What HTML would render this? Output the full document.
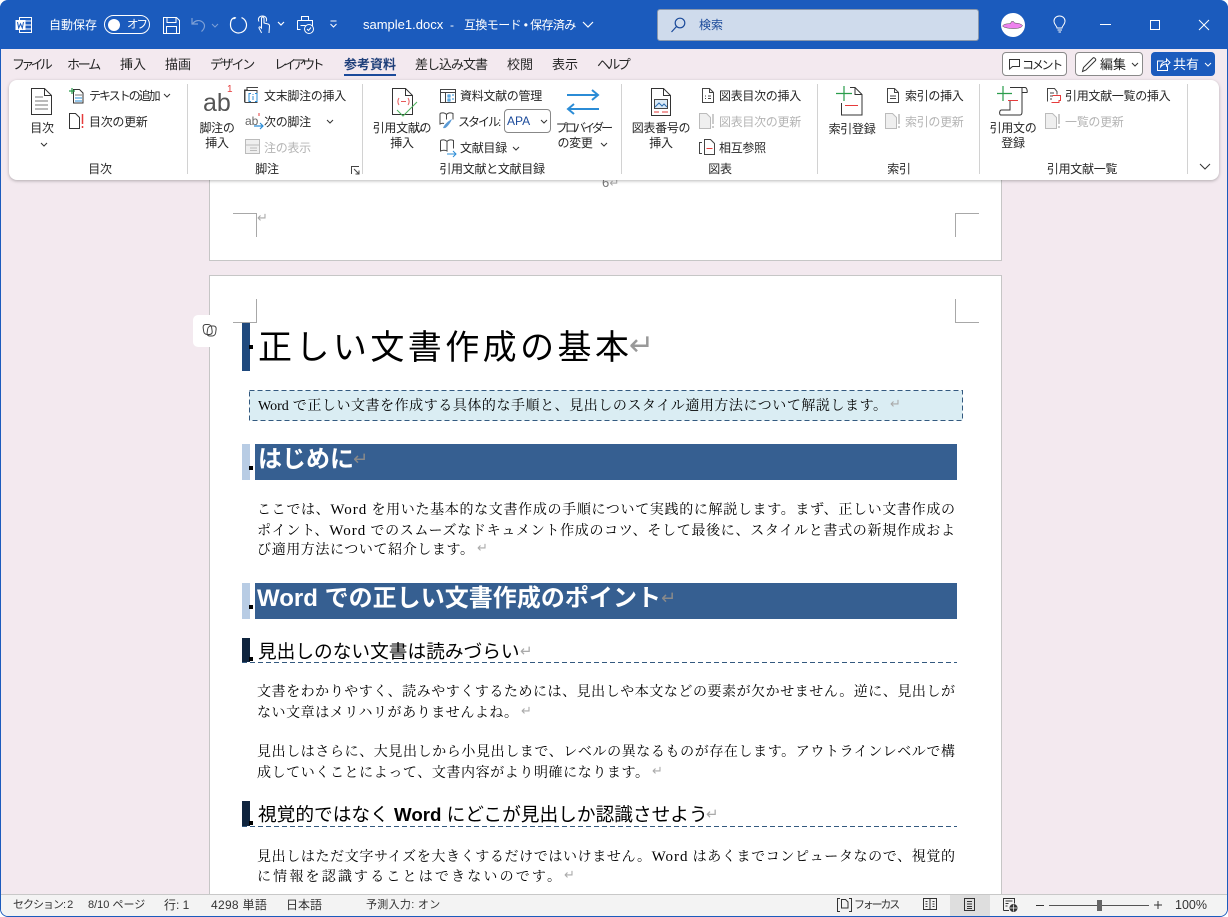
<!DOCTYPE html>
<html lang="ja"><head><meta charset="utf-8"><title>sample1.docx</title>
<style>
*{box-sizing:border-box}
html,body{margin:0;padding:0;width:1228px;height:917px;overflow:hidden;background:#fff}
body{font-family:"Liberation Sans","Noto Sans CJK JP",sans-serif;color:#262626;position:relative}
.a{position:absolute;white-space:nowrap;line-height:16px}
.u{font-size:12px;letter-spacing:-.3px}
.t{font-size:13px;top:57px}
.m{line-height:15px}
.c{text-align:center}
.d{color:#b4b4b4}
.b{font-family:"Liberation Serif","Noto Serif CJK JP","Noto Serif CJK SC",serif;font-size:14px;color:#000;text-align:justify;text-align-last:justify;line-height:20px;height:20px;transform:translateY(1px)}
.wd{font-size:15px;letter-spacing:1px}
.h{font-family:"Liberation Sans","Noto Sans CJK JP",sans-serif;color:#000}
.r{color:#aaa;font-family:"DejaVu Sans",sans-serif}
.rb{font-size:13px;margin-top:-1px}
.dl{position:absolute;height:1px;background:repeating-linear-gradient(90deg,#33597f 0 5px,transparent 5px 8px)}
svg{position:absolute;overflow:visible;fill:none}
.box{position:absolute}
.w{color:#fff}
.s{font-size:11px;color:#333;top:897px}
</style></head><body>
<!-- window -->
<div class="box" style="left:0;top:0;width:1228px;height:917px;background:#f3e9ef;border:1px solid #1b5bbd;border-top:0;border-radius:8px"></div>
<div class="box" style="left:0;top:0;width:1228px;height:49px;background:#1b5bbd;border-radius:8px 8px 0 0"></div>

<!-- title bar icons -->
<svg style="left:15px;top:16px" width="18" height="18"><rect x="4.500" y="1.500" width="12" height="15" stroke="#fff"/><path d="M10 5h6M10 9h6M10 13h6" stroke="#fff"/><rect x="0.5" y="4" width="10" height="10" fill="#fff"/><path d="M2.500 6l1.200 6 1.800-4.200 1.800 4.200 1.200-6" stroke="#1b5bbd" stroke-width="1"/></svg>
<span class="a u w" style="left:49px;top:17px;letter-spacing:0">自動保存</span>
<div class="box" style="left:104px;top:15px;width:46px;height:19px;border:1px solid #fff;border-radius:10px"></div>
<div class="box" style="left:108px;top:18.5px;width:12px;height:12px;background:#fff;border-radius:50%"></div>
<span class="a u w" style="left:127px;top:17px;font-size:11.5px;letter-spacing:-2px">オフ</span>
<svg style="left:163px;top:17px" width="17" height="17" stroke="#fff"><path d="M.5.500h13l3 3v13H.500z"/><path d="M4 .5v5h9v-5M3.500 16.500v-7h10v7"/></svg>
<svg style="left:190px;top:16px" width="20" height="18" stroke="#7ea0d6" stroke-width="1.2"><path d="M2 2v6h6M2.500 8C5 4 10 3.500 13 6.500c2.500 2.500 1.800 6-1.500 9"/></svg>
<svg style="left:211px;top:23px" width="8" height="6" stroke="#7ea0d6"><path d="M1 1l3 3 3-3"/></svg>
<svg style="left:228px;top:15px" width="20" height="20" stroke="#fff" stroke-width="1.2"><path d="M8 2.500L5.500 4M7 2.500C3 3.500 2.500 6.500 2.500 10a8 8 0 1 0 11-7.400"/></svg>
<svg style="left:255px;top:15px" width="20" height="20" stroke="#fff"><path d="M6.500 18c-.5-2-2-3.500-2.500-5-.3-1 .8-1.500 1.500-.8l1 1V3.500c0-2 2.500-2 2.500 0v4.500l4 1c1 .3 1.500 1 1.500 2l-.5 7"/><path d="M4 6.500C2.500 4 4 1 7.500 1s5 3 3.500 5.500"/></svg>
<svg style="left:277px;top:21px" width="8" height="6" stroke="#fff" stroke-width="1.2"><path d="M1 1l3 3 3-3"/></svg>
<svg style="left:296px;top:15px" width="20" height="20" stroke="#fff"><path d="M5.500 5.500v-4h7v4M1.500 5.500h15v9h-3M1.500 5.500v9h3"/><path d="M4.500 10.500h5"/><circle cx="13" cy="14" r="4.500" fill="#1b5bbd"/><path d="M11 14l1.500 1.500 2.500-3"/></svg>
<svg style="left:329px;top:20px" width="10" height="9" stroke="#fff"><path d="M1.500 1h6M1.500 4l3 3 3-3"/></svg>
<span class="a w" style="left:363px;top:17px;font-size:13px">sample1.docx</span>
<span class="a w" style="left:450px;top:17px;font-size:12px">-</span>
<span class="a u w" style="left:464px;top:17px;letter-spacing:-.6px">互換モード • 保存済み</span>
<svg style="left:582px;top:21px" width="12" height="8" stroke="#fff" stroke-width="1.2"><path d="M1 1l5 5 5-5"/></svg>

<!-- search -->
<div class="box" style="left:657px;top:9px;width:322px;height:32px;background:#cfdbec;border:1px solid #8a98ad;border-radius:3px"></div>
<svg style="left:670px;top:17px" width="16" height="16" stroke="#1b4a9a" stroke-width="1.2"><circle cx="10" cy="6" r="4.800"/><path d="M6.500 9.500L1.500 15"/></svg>
<span class="a u" style="left:699px;top:17px;color:#1b4a9a;letter-spacing:0">検索</span>

<!-- account -->
<div class="box" style="left:1001px;top:13px;width:24px;height:24px;background:#fff;border-radius:50%"></div>
<svg style="left:1002px;top:20px" width="22" height="11"><path d="M0.500 6c2-2.500 5-2 8-2.500l1-2 2 0 1 1.500c3 .3 6 .5 8 2.500-1 2.500-5 3-9 3s-9-.5-11-2.500z" fill="#ee82ee" stroke="#444" stroke-width=".5"/></svg>
<svg style="left:1052px;top:15px" width="16" height="20" stroke="#fff"><path d="M5 13c0-2-3-3.500-3-7 0-3 2.500-5 5.500-5S13 3 13 6c0 3.500-3 5-3 7z"/><path d="M5.500 15h4.500M6.500 17h2.500"/></svg>
<div class="box" style="left:1100px;top:24px;width:11px;height:1px;background:#fff"></div>
<div class="box" style="left:1150px;top:20px;width:10px;height:10px;border:1px solid #fff"></div>
<svg style="left:1198px;top:19px" width="12" height="12" stroke="#fff"><path d="M1 1l10 10M11 1L1 11"/></svg>

<!-- tabs -->
<span class="a t" style="left:12px;letter-spacing:-3.75px">ファイル</span>
<span class="a t" style="left:67px;letter-spacing:-2.2px">ホーム</span>
<span class="a t" style="left:120px">挿入</span>
<span class="a t" style="left:165px">描画</span>
<span class="a t" style="left:210px;letter-spacing:-2.25px">デザイン</span>
<span class="a t" style="left:274px;letter-spacing:-3.6px">レイアウト</span>
<span class="a t" style="left:344px;font-weight:bold;color:#1f3f7a">参考資料</span>
<div class="box" style="left:344px;top:74px;width:52px;height:2px;background:#1b4a9a"></div>
<span class="a t" style="left:415px;letter-spacing:-1px">差し込み文書</span>
<span class="a t" style="left:507px">校閲</span>
<span class="a t" style="left:552px">表示</span>
<span class="a t" style="left:597px;letter-spacing:-2.6px">ヘルプ</span>

<!-- right buttons -->
<div class="box" style="left:1002px;top:52px;width:65px;height:24px;background:#fff;border:1px solid #8a8a8a;border-radius:4px"></div>
<svg style="left:1008px;top:58px" width="13" height="13" stroke="#333"><path d="M1.500 1.500h10v7h-7l-3 2.500z"/></svg>
<span class="a u" style="left:1022px;top:57px;color:#222;letter-spacing:-2.25px">コメント</span>
<div class="box" style="left:1075px;top:52px;width:68px;height:24px;background:#fff;border:1px solid #8a8a8a;border-radius:4px"></div>
<svg style="left:1081px;top:56px" width="16" height="17" stroke="#333"><path d="M1.500 15.500l1-4L12 2c1-1 3.500 1 2.500 2.500L5 14z"/></svg>
<span class="a" style="left:1100px;top:57px;color:#222;font-size:13px">編集</span>
<svg style="left:1131px;top:62px" width="8" height="6" stroke="#333"><path d="M1 1l3 3 3-3"/></svg>
<div class="box" style="left:1151px;top:52px;width:64px;height:24px;background:#1b5bbd;border-radius:4px"></div>
<svg style="left:1156px;top:57px" width="15" height="15" stroke="#fff"><path d="M7.500 4h-6v9.500h10V9"/><path d="M4.500 10c.5-4 4-5.500 6-5.500V2l3.500 3.500-3.500 3.500V7c-2 0-4.500 1-6 3z"/></svg>
<span class="a w" style="left:1173px;top:57px;font-size:13px">共有</span>
<svg style="left:1204px;top:62px" width="8" height="6" stroke="#fff"><path d="M1 1l3 3 3-3"/></svg>

<!-- document area -->
<div class="box" style="left:209px;top:170px;width:793px;height:91px;background:#fff;border:1px solid #c6c6c6;border-top:0"></div>
<div class="box" style="left:209px;top:275px;width:793px;height:630px;background:#fff;border:1px solid #c6c6c6;border-bottom:0"></div>
<span class="a" style="left:602px;top:175px;color:#777;font-size:13px">6<span class="r" style="font-size:12px">↵</span></span>
<!-- crop marks -->
<div class="box" style="left:233px;top:213px;width:24px;height:24px;border-top:1px solid #a8a8a8;border-right:1px solid #a8a8a8"></div>
<span class="a r" style="left:257px;top:211px;font-size:13px">↵</span>
<div class="box" style="left:955px;top:213px;width:24px;height:24px;border-top:1px solid #a8a8a8;border-left:1px solid #a8a8a8"></div>
<div class="box" style="left:233px;top:299px;width:24px;height:24px;border-bottom:1px solid #a8a8a8;border-right:1px solid #a8a8a8"></div>
<div class="box" style="left:955px;top:299px;width:24px;height:24px;border-bottom:1px solid #a8a8a8;border-left:1px solid #a8a8a8"></div>
<!-- copilot -->
<div class="box" style="left:193px;top:315px;width:32px;height:32px;background:#fff;border-radius:5px"></div>
<svg style="left:201px;top:323px" width="17" height="15" stroke="#444"><rect x="1.500" y="1.500" width="8.500" height="10" rx="3" transform="skewX(8)"/><rect x="5.500" y="3" width="8.500" height="10" rx="3" transform="skewX(-8) translate(2,0)"/></svg>

<!-- title -->
<div class="box" style="left:242px;top:323px;width:8px;height:48px;background:#1f497d"></div>
<div class="box" style="left:249px;top:345px;width:4px;height:4px;background:#000"></div>
<span class="a h" style="left:258px;top:326px;width:371px;font-size:34px;line-height:44px;text-align:justify;text-align-last:justify">正しい文書作成の基本</span>
<span class="a r" style="left:629px;top:331px;font-size:30px;line-height:30px;color:#999">↵</span>

<!-- subtitle -->
<svg style="left:249px;top:390px" width="714" height="31"><rect x=".5" y=".5" width="713" height="30" fill="#daedf3" stroke="#33597f" stroke-dasharray="5 3"/></svg>
<div class="a b" style="left:258px;top:396px;width:629px">Word で正しい文書を作成する具体的な手順と、見出しのスタイル適用方法について解説します。</div>
<span class="a r rb" style="left:890px;top:398px">↵</span>

<!-- h1 -->
<div class="box" style="left:242px;top:444px;width:8px;height:36px;background:#b8cce4"></div>
<div class="box" style="left:249px;top:466px;width:4px;height:4px;background:#000"></div>
<div class="box" style="left:255px;top:444px;width:702px;height:36px;background:#365f91"></div>
<span class="a w" style="left:258px;top:447px;font-size:24px;line-height:26px;font-weight:bold">はじめに</span>
<span class="a r" style="left:353px;top:450px;font-size:18px;line-height:20px;color:#8a8a8a">↵</span>

<div class="a b" style="left:257px;top:499px;width:698px">ここでは、<span class="wd">Word</span> を用いた基本的な文書作成の手順について実践的に解説します。まず、正しい文書作成の</div>
<div class="a b" style="left:257px;top:520px;width:698px">ポイント、<span class="wd">Word</span> でのスムーズなドキュメント作成のコツ、そして最後に、スタイルと書式の新規作成およ</div>
<div class="a b" style="left:257px;top:540px;width:217px">び適用方法について紹介します。</div>
<span class="a r rb" style="left:477px;top:542px">↵</span>

<!-- h1 2 -->
<div class="box" style="left:242px;top:583px;width:8px;height:36px;background:#b8cce4"></div>
<div class="box" style="left:249px;top:605px;width:4px;height:4px;background:#000"></div>
<div class="box" style="left:255px;top:583px;width:702px;height:36px;background:#365f91"></div>
<span class="a w" style="left:257px;top:586px;width:404px;font-size:24px;line-height:26px;font-weight:bold;text-align:justify;text-align-last:justify">Word での正しい文書作成のポイント</span>
<span class="a r" style="left:661px;top:589px;font-size:18px;line-height:20px;color:#8a8a8a">↵</span>

<!-- h2 -->
<div class="box" style="left:242px;top:638px;width:8px;height:24px;background:#0f243e"></div>
<div class="box" style="left:249px;top:657px;width:4px;height:4px;background:#000"></div>
<span class="a h" style="left:258px;top:640px;font-size:18.7px;line-height:24px">見出しのない文書は読みづらい</span>
<span class="a r" style="left:520px;top:642px;font-size:15px;line-height:18px">↵</span>
<div class="dl" style="left:242px;top:662px;width:715px"></div>

<div class="a b" style="left:257px;top:682px;width:698px">文書をわかりやすく、読みやすくするためには、見出しや本文などの要素が欠かせません。逆に、見出しが</div>
<div class="a b" style="left:257px;top:703px;width:261px">ない文章はメリハリがありませんよね。</div>
<span class="a r rb" style="left:521px;top:705px">↵</span>
<div class="a b" style="left:257px;top:742px;width:698px">見出しはさらに、大見出しから小見出しまで、レベルの異なるものが存在します。アウトラインレベルで構</div>
<div class="a b" style="left:257px;top:763px;width:392px">成していくことによって、文書内容がより明確になります。</div>
<span class="a r rb" style="left:652px;top:765px">↵</span>

<div class="box" style="left:242px;top:801px;width:8px;height:25px;background:#0f243e"></div>
<div class="box" style="left:249px;top:821px;width:4px;height:4px;background:#000"></div>
<span class="a h" style="left:258px;top:803px;font-size:18.7px;line-height:24px">視覚的ではなく <b>Word</b> にどこが見出しか認識させよう</span>
<span class="a r" style="left:706px;top:805px;font-size:15px;line-height:18px">↵</span>
<div class="dl" style="left:242px;top:826px;width:715px"></div>

<div class="a b" style="left:257px;top:846px;width:698px">見出しはただ文字サイズを大きくするだけではいけません。<span class="wd">Word</span> はあくまでコンピュータなので、視覚的</div>
<div class="a b" style="left:257px;top:867px;width:304px">に情報を認識することはできないのです。</div>
<span class="a r rb" style="left:564px;top:869px">↵</span>

<!-- ribbon -->
<div class="box" style="left:9px;top:80px;width:1210px;height:100px;background:#fff;border-radius:8px;box-shadow:0 1px 3px rgba(0,0,0,.28)"></div>
<div class="box" style="left:187px;top:84px;width:1px;height:90px;background:#d2d2d2"></div>
<div class="box" style="left:362px;top:84px;width:1px;height:90px;background:#d2d2d2"></div>
<div class="box" style="left:621px;top:84px;width:1px;height:90px;background:#d2d2d2"></div>
<div class="box" style="left:817px;top:84px;width:1px;height:90px;background:#d2d2d2"></div>
<div class="box" style="left:979px;top:84px;width:1px;height:90px;background:#d2d2d2"></div>
<div class="box" style="left:1187px;top:84px;width:1px;height:90px;background:#d2d2d2"></div>

<!-- group labels -->
<span class="a u c" style="left:70px;top:161px;width:60px">目次</span>
<span class="a u c" style="left:237px;top:161px;width:60px">脚注</span>
<span class="a u c" style="left:422px;top:161px;width:140px">引用文献と文献目録</span>
<span class="a u c" style="left:690px;top:161px;width:60px">図表</span>
<span class="a u c" style="left:869px;top:161px;width:60px">索引</span>
<span class="a u c" style="left:1032px;top:161px;width:100px">引用文献一覧</span>

<!-- 目次 group -->
<svg style="left:30px;top:87px" width="24" height="30" stroke="#333"><path d="M1.500 1.500h13l7 7v19h-20z"/><path d="M14.500 1.500v7h7"/><path d="M5 10h8M5 14h13M5 18h13M5 22h13" stroke="#777"/></svg>
<span class="a u c" style="left:22px;top:120px;width:40px">目次</span>
<svg style="left:40px;top:142px" width="8" height="6" stroke="#333"><path d="M1 1l3 3 3-3"/></svg>
<svg style="left:69px;top:87px" width="16" height="18"><path d="M4.500 2.500h6l3.500 3.500v10H4.500z" stroke="#333"/><path d="M6 8h7" stroke="#777"/><path d="M6 11h7M6 14h7" stroke="#2b8cd6"/><path d="M3 1v6M0 4h6" stroke="#2a9d4b" stroke-width="1.200"/></svg>
<span class="a u" style="left:89px;top:88px;letter-spacing:-2px">テキストの追加</span>
<svg style="left:163px;top:93px" width="8" height="6" stroke="#333"><path d="M1 1l3 3 3-3"/></svg>
<svg style="left:69px;top:113px" width="16" height="16"><path d="M.5.500h6l4 4v11H.500z" stroke="#333"/><path d="M13.500 1v10M13.500 13v2" stroke="#e63b3b" stroke-width="1.500"/></svg>
<span class="a u" style="left:89px;top:114px">目次の更新</span>

<!-- 脚注 group -->
<span class="a" style="left:203px;top:88px;font-size:25px;line-height:30px;color:#555">ab</span>
<span class="a" style="left:227px;top:84px;font-size:10px;line-height:12px;color:#e63b3b">1</span>
<span class="a u c m" style="left:193px;top:121px;width:48px">脚注の<br>挿入</span>
<svg style="left:244px;top:87px" width="18" height="18"><path d="M3 3V.500h11" stroke="#444"/><path d="M.5 15V3h3v12" stroke="#444"/><rect x="1" y="3.500" width="12" height="12" stroke="#444" fill="#fff"/><path d="M7 6.500H5v8h2M11 6.500h2v8h-2M9 9v4M9 7v1" stroke="#2b8cd6"/></svg>
<span class="a u" style="left:264px;top:88px">文末脚注の挿入</span>
<span class="a" style="left:245px;top:113px;font-size:12px;color:#666;line-height:16px">ab</span>
<svg style="left:252px;top:112px" width="14" height="18"><path d="M7 1v3" stroke="#e63b3b"/><path d="M2 14h9M8 11l3 3-3 3" stroke="#2b8cd6" stroke-width="1.200"/></svg>
<span class="a u" style="left:264px;top:114px">次の脚注</span>
<svg style="left:326px;top:119px" width="8" height="6" stroke="#333"><path d="M1 1l3 3 3-3"/></svg>
<svg style="left:245px;top:139px" width="16" height="16"><rect x=".5" y=".5" width="14" height="14" fill="#efefef" stroke="#bbb"/><path d="M1 6h13M5 9h7M5 11.500h7" stroke="#bbb"/></svg>
<span class="a u d" style="left:264px;top:140px">注の表示</span>
<svg style="left:351px;top:166px" width="9" height="9" stroke="#444"><path d="M.5 8V.500H8M3 3l5 5M8 4.500V8H4.500"/></svg>

<!-- 引用 group -->
<svg style="left:391px;top:87px" width="28" height="30"><path d="M1.500 1.500h13l7 7v19h-20z" stroke="#333"/><path d="M14.500 1.500v7h7" stroke="#333"/><path d="M8 11c-1.500 2-1.500 5 0 7M17 11c1.500 2 1.500 5 0 7M10 14.500h5" stroke="#e65a5a"/><path d="M6 23l6 6 14-14" stroke="#4cb35c"/></svg>
<span class="a u c m" style="left:368px;top:121px;width:68px">引用文献の<br>挿入 <svg style="left:47px;top:7px" width="8" height="6" stroke="#333"><path d="M1 1l3 3 3-3"/></svg></span>
<svg style="left:440px;top:87px" width="17" height="17"><path d="M.5 2.500h15v13H.500z" stroke="#444"/><path d="M.5 5.500h15M5.500 5.500v10" stroke="#444"/><path d="M8 8h2v2H8zM12 8h2M8 12h2v2H8zM12 12h2" stroke="#2b8cd6"/></svg>
<span class="a u" style="left:460px;top:88px">資料文献の管理</span>
<svg style="left:439px;top:112px" width="18" height="18"><path d="M1 1.500c2-1 5-1 6.500 1 1.500-2 4.500-2 6.500-1v6M1 1.500V12c2-1 3-1 4-.5M7.500 2.500v5" stroke="#444"/><path d="M4 16c1-3 5-7 9-9-1 3-4 7-6 8.500-1 .8-2 .8-3 .5z" fill="#5c9bd5"/></svg>
<span class="a u" style="left:458px;top:114px;letter-spacing:-2px">スタイル:</span>
<div class="box" style="left:504px;top:109px;width:47px;height:24px;border:1px solid #888;border-radius:4px"></div>
<span class="a u" style="left:507px;top:113px;color:#1b4a9a;letter-spacing:0">APA</span>
<svg style="left:540px;top:119px" width="8" height="6" stroke="#333"><path d="M1 1l3 3 3-3"/></svg>
<svg style="left:440px;top:139px" width="18" height="18"><path d="M.5 1.500c2-1 5-1 6.500 1 1.500-2 4.500-2 6.500-1v8M.5 1.500V12c2-1 5-1 6.500 0V2.500" stroke="#444"/><path d="M7 15h9M13 12l3 3-3 3" stroke="#2b8cd6"/></svg>
<span class="a u" style="left:460px;top:140px">文献目録</span>
<svg style="left:512px;top:146px" width="8" height="6" stroke="#333"><path d="M1 1l3 3 3-3"/></svg>
<svg style="left:566px;top:89px" width="34" height="30" stroke="#2b8cd6" stroke-width="2"><path d="M1 6h31M26 1l6 5-6 5M33 20H2M8 15l-6 5 6 5"/></svg>
<span class="a u c m" style="left:551px;top:121px;width:64px;letter-spacing:-2.8px">プロバイダー</span>
<span class="a u c m" style="left:543px;top:136px;width:64px">の変更</span>
<svg style="left:600px;top:142px" width="8" height="6" stroke="#333"><path d="M1 1l3 3 3-3"/></svg>

<!-- 図表 group -->
<svg style="left:650px;top:88px" width="22" height="28"><path d="M1.500.500h12l7 7v20h-19z" stroke="#333"/><path d="M13.500.500v7h7" stroke="#333"/><rect x="4.500" y="11.500" width="13" height="9" stroke="#444" fill="#dbeaf6"/><path d="M5 19l4-4 3 3 2-2 3 3" stroke="#2b6cb0"/><path d="M4 24h5M12 24h6" stroke="#e63b3b"/></svg>
<span class="a u c m" style="left:628px;top:121px;width:66px">図表番号の<br>挿入</span>
<svg style="left:701px;top:87px" width="14" height="17" stroke="#444"><path d="M1.500 1.500h7l4 4v10h-11z"/><path d="M8.500 1.500v4h4M4 9h1M7 9h3M4 11.500h1M7 11.500h3"/></svg>
<span class="a u" style="left:719px;top:88px">図表目次の挿入</span>
<svg style="left:699px;top:113px" width="17" height="16"><path d="M.5.500h7l4 4v11H.500z" stroke="#bbb" fill="#efefef"/><path d="M14 1v10M14 13v2" stroke="#bbb" stroke-width="1.500"/></svg>
<span class="a u d" style="left:719px;top:114px">図表目次の更新</span>
<svg style="left:699px;top:139px" width="17" height="16"><path d="M3 3.500H.500v11H3" stroke="#444"/><path d="M5.500 .5h6l4 4v11h-10z" stroke="#444"/><path d="M7.500 9.500h6" stroke="#e63b3b"/></svg>
<span class="a u" style="left:719px;top:140px">相互参照</span>

<!-- 索引 group -->
<svg style="left:836px;top:86px" width="28" height="30"><path d="M14 1.500h5l7 7V29H5.500V17" stroke="#333"/><path d="M19 1.500v7h7" stroke="#333"/><path d="M8 0v15M0 7.500h16" stroke="#2a9d4b" stroke-width="1.200"/><path d="M9 19.500h13" stroke="#e63b3b"/></svg>
<span class="a u c" style="left:822px;top:121px;width:60px">索引登録</span>
<svg style="left:886px;top:87px" width="14" height="17" stroke="#444"><path d="M1.500 1.500h7l4 4v10h-11z"/><path d="M8.500 1.500v4h4M4 9h6M4 11.500h6"/></svg>
<span class="a u" style="left:905px;top:88px">索引の挿入</span>
<svg style="left:885px;top:113px" width="17" height="16"><path d="M.5.500h7l4 4v11H.500z" stroke="#bbb" fill="#efefef"/><path d="M14 1v10M14 13v2" stroke="#bbb" stroke-width="1.500"/></svg>
<span class="a u d" style="left:905px;top:114px">索引の更新</span>

<!-- 引用文献一覧 group -->
<svg style="left:997px;top:86px" width="32" height="32"><path d="M13 1.500H28c2 0 2.500 4 2 5h-5M25 1.500V26c0 1.500-.5 3-2 3H3.500c-1.500-1-1-5 1-5H13V15" stroke="#333"/><path d="M6 0v15M0 7.500h15" stroke="#2a9d4b" stroke-width="1.200"/><path d="M11 14.500h10" stroke="#e63b3b"/></svg>
<span class="a u c m" style="left:985px;top:121px;width:56px">引用文の<br>登録</span>
<svg style="left:1046px;top:87px" width="16" height="17"><path d="M1.500 14.500v-13h7l2.500 3v3" stroke="#444"/><path d="M4 6h4M4 9h3M4 12h2" stroke="#444"/><path d="M6.500 8.500h8v5h-1.500v2H5.500" stroke="#e63b3b"/></svg>
<span class="a u" style="left:1065px;top:88px">引用文献一覧の挿入</span>
<svg style="left:1045px;top:113px" width="17" height="16"><path d="M.5.500h7l4 4v11H.500z" stroke="#bbb" fill="#efefef"/><path d="M14 1v10M14 13v2" stroke="#bbb" stroke-width="1.500"/></svg>
<span class="a u d" style="left:1065px;top:114px">一覧の更新</span>
<svg style="left:1199px;top:163px" width="12" height="8" stroke="#333"><path d="M1 1l5 5 5-5"/></svg>

<!-- status bar -->
<div class="box" style="left:1px;top:894px;width:1226px;height:22px;background:#f3f3f3;border-top:1px solid #c8c8c8;border-radius:0 0 7px 7px"></div>
<div class="box" style="left:950px;top:895px;width:40px;height:21px;background:#dedede"></div>
<span class="a s" style="left:13px;letter-spacing:-1px">セクション: 2</span>
<span class="a s" style="left:88px;letter-spacing:0">8/10 ページ</span>
<span class="a s" style="left:164px;font-size:12px">行: 1</span>
<span class="a s" style="left:211px;font-size:12px;letter-spacing:.3px">4298 単語</span>
<span class="a s" style="left:286px;font-size:12px">日本語</span>
<span class="a s" style="left:366px;letter-spacing:.3px">予測入力: オン</span>
<svg style="left:837px;top:898px" width="15" height="14" stroke="#333"><path d="M3 .500H.500v13H3M12 .500h2.500v13H12"/><path d="M4.500 1.500h4l2.500 2.500v6H4.500z"/></svg>
<span class="a s" style="left:854px;letter-spacing:-2.2px">フォーカス</span>
<svg style="left:923px;top:898px" width="14" height="13" stroke="#333"><path d="M.5.500h13v11H.500zM7 .500v11M2.500 3.500h2M2.500 6h2M2.500 8.500h2M9.500 3.500h2M9.500 6h2M9.500 8.500h2"/></svg>
<svg style="left:964px;top:898px" width="12" height="14" stroke="#333"><path d="M.5.500h10v12H.500zM3 3.500h5M3 6h5M3 8.500h5M3 10.500h5"/></svg>
<svg style="left:1003px;top:898px" width="15" height="14" stroke="#333"><path d="M.5 12.500V.500h11v5M2.500 3h7M2.500 5.500h3M2.500 8h2M.5 12.500H6"/><circle cx="10.500" cy="10" r="3.500" fill="#333"/><path d="M7 10h7M10.500 6.500v7" stroke="#fff" stroke-width=".7"/></svg>
<div class="box" style="left:1036px;top:905px;width:8px;height:1px;background:#333"></div>
<div class="box" style="left:1049px;top:905px;width:100px;height:1px;background:#555"></div>
<div class="box" style="left:1097px;top:900px;width:5px;height:11px;background:#666"></div>
<svg style="left:1154px;top:901px" width="8" height="8" stroke="#333"><path d="M0 4h8M4 0v8"/></svg>
<span class="a s" style="left:1175px;font-size:12.5px">100%</span>
</body></html>
